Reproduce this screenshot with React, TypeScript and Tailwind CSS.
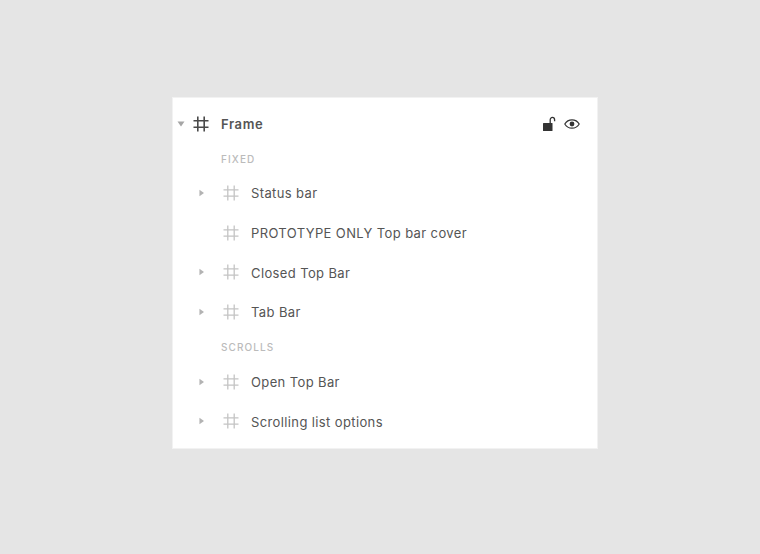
const font = "font-['Inter',sans-serif]";

function FrameIcon({ dark }: { dark?: boolean }) {
  return (
    <svg width="16" height="16" viewBox="0 0 16 16" fill="none" stroke={dark ? "#4a4a4a" : "#c4c4c4"} strokeWidth={dark ? 1.6 : 1.3}>
      <path d="M0.5 4.8H15.5M0.5 11.2H15.5M4.8 0.5V15.5M11.2 0.5V15.5" />
    </svg>
  );
}

function Arrow({ open }: { open?: boolean }) {
  return (
    <svg width="6" height="8" viewBox="0 0 6 8" className={open ? "rotate-90" : ""}>
      <path d="M0.5 0.5L5.5 4L0.5 7.5Z" fill={open ? "#a6a6a6" : "#b3b3b3"} />
    </svg>
  );
}

function Row({ label, arrow = true }: { label: string; arrow?: boolean }) {
  return (
    <div className="h-[39.7px] flex items-center">
      <div className="w-[31px] pl-[25.5px] flex items-center">{arrow && <Arrow />}</div>
      <div className="ml-[19px] flex items-center">
        <FrameIcon />
      </div>
      <span className="ml-[12px] pt-[2px] text-[13px] leading-none tracking-[0.38px] text-[#555555]">{label}</span>
    </div>
  );
}

function Heading({ children, className }: { children: string; className: string }) {
  return (
    <div className={`h-[27px] flex items-center pl-[48px] text-[10px] leading-none font-medium tracking-[1.1px] text-[#bbbbbb] ${className}`}>
      {children}
    </div>
  );
}

export default function App() {
  return (
    <div className={`w-[760px] h-[554px] bg-[#e5e5e5] pt-[97px] pl-[172px] ${font}`}>
      <div className="w-[426px] h-[352px] bg-white border border-[#f2f2f2] pt-[12px]">
        <div className="h-[28px] flex items-center">
          <div className="pl-[5px] flex items-center">
            <Arrow open />
          </div>
          <div className="ml-[9px] flex items-center">
            <FrameIcon dark />
          </div>
          <span className="ml-[12px] text-[13px] leading-none font-semibold tracking-[0.6px] text-[#555555]">Frame</span>
          <div className="ml-auto mr-[17px] flex items-center gap-[8px]">
            <svg width="14" height="16" viewBox="0 0 14 16">
              <rect x="1" y="7" width="9.5" height="8" rx="0.5" fill="#333333" />
              <path d="M8.2 7V3.8C8.2 2.4 9.2 1.4 10.4 1.4C11.6 1.4 12.6 2.4 12.6 3.8V5.2" fill="none" stroke="#333333" strokeWidth="1.3" />
            </svg>
            <svg width="16" height="10" viewBox="0 0 16 10">
              <path d="M0.8 5C2.4 2.3 5 0.8 8 0.8C11 0.8 13.6 2.3 15.2 5C13.6 7.7 11 9.2 8 9.2C5 9.2 2.4 7.7 0.8 5Z" fill="none" stroke="#333333" strokeWidth="1.2" />
              <circle cx="8" cy="5" r="2.4" fill="#333333" />
            </svg>
          </div>
        </div>
        <Heading className="mt-[7px]">FIXED</Heading>
        <div className="mt-[1px]">
          <Row label="Status bar" />
          <Row label="PROTOTYPE ONLY Top bar cover" arrow={false} />
          <Row label="Closed Top Bar" />
          <Row label="Tab Bar" />
        </div>
        <Heading className="mt-[2px]">SCROLLS</Heading>
        <div className="mt-[1px]">
          <Row label="Open Top Bar" />
          <Row label="Scrolling list options" />
        </div>
      </div>
    </div>
  );
}
